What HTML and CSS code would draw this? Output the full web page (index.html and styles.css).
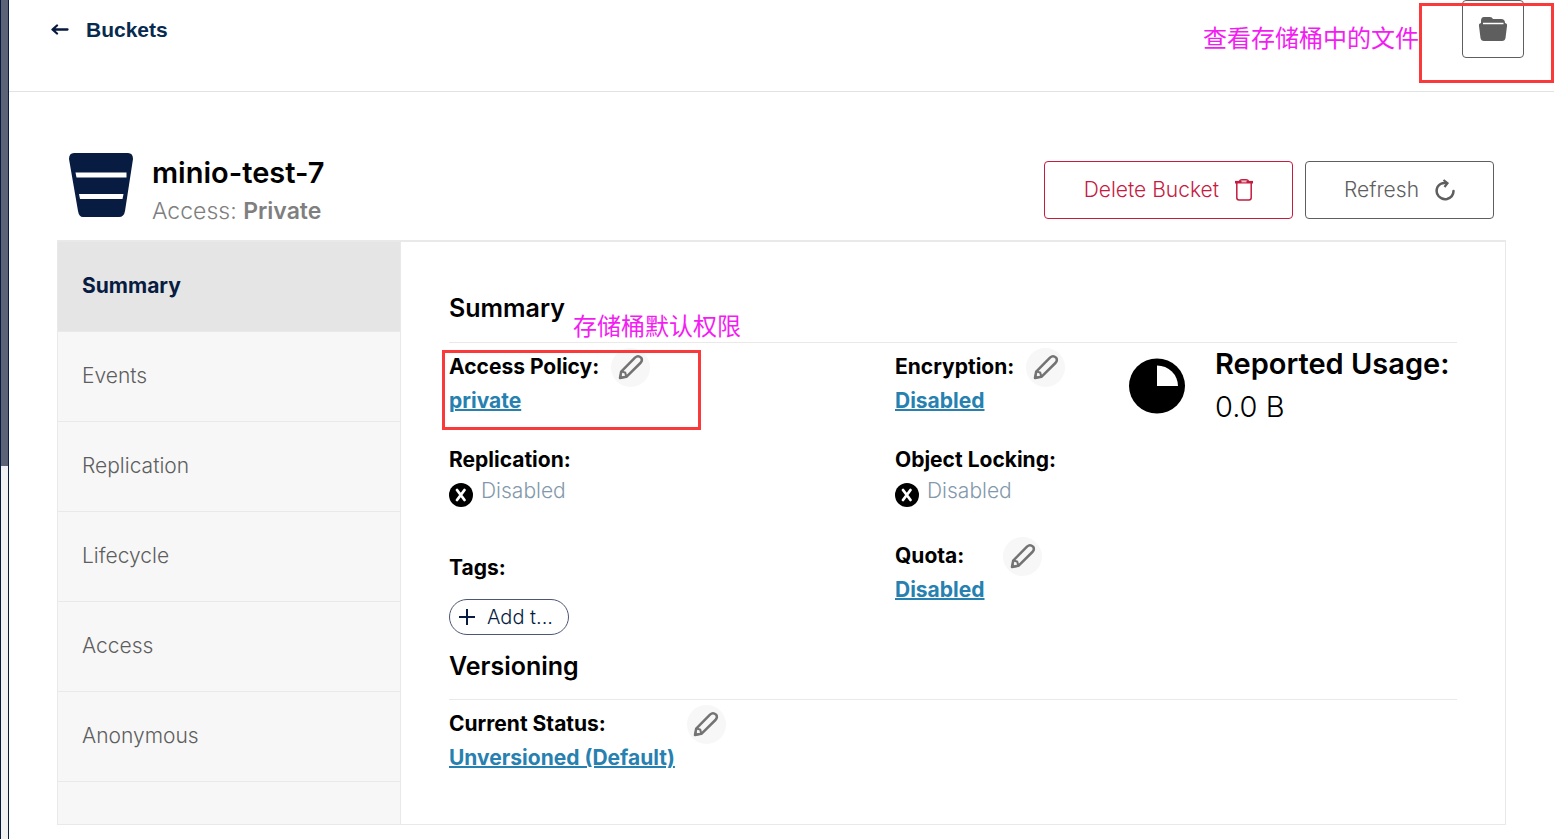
FILE: index.html
```html
<!DOCTYPE html>
<html lang="en">
<head>
<meta charset="utf-8">
<title>Buckets</title>
<link rel="stylesheet" href="styles.css">
</head>
<body>
<svg class="sprite" aria-hidden="true">
  <symbol id="pencil" viewBox="0 0 26 26">
    <path d="M2 24 3.2 17.6 17 3.6Q20 1 23 3.6 25 6.400 22.400 9L8.400 22.800Z" fill="none" stroke="currentColor" stroke-width="2.500" stroke-linejoin="round"/>
    <path d="M3.400 17.500 7.200 18.600 8.400 22.600" fill="none" stroke="currentColor" stroke-width="2"/>
    <path d="M1 25 2 20 6 24Z" fill="currentColor"/>
  </symbol>
  <symbol id="disabled" viewBox="0 0 24 24">
    <circle cx="12" cy="12" r="12"/>
    <path d="M8 7 15.500 17M15.500 7 8 17" stroke="#fff" stroke-width="2.800" stroke-linecap="round"/>
  </symbol>
</svg>
<div class="app">
  <div class="edge"><div class="edge-thumb"></div></div>
  <div class="page">
    <header class="topbar">
      <a class="back" href="#">
        <svg width="18" height="12" viewBox="0 0 18 12" fill="none" stroke="currentColor" stroke-width="2.300" stroke-linecap="round" stroke-linejoin="round"><path d="M16.500 5.500H2M6 1.500 1.500 5.500 6 9.500"/></svg>
        <span>Buckets</span>
      </a>
      <div class="browse">
        <button class="btn icon-btn" type="button" aria-label="Browse bucket">
          <svg width="30" height="26" viewBox="0 0 30 26"><path d="M3 7V5Q3 1 6 1H12Q14 1 15 3H23Q27 3 27 7Q29.500 7.500 29 10L27.500 22Q27 25 24 25H6Q3 25 2.500 22L1 10Q.5 7.500 3 7Z" fill="#5e5e5e"/><path d="M5 7.500H25.500" stroke="#fff" stroke-width="1.500"/></svg>
        </button>
        <div class="mark mark-files"></div>
        <span class="note note-files" lang="zh">查看存储桶中的文件</span>
      </div>
    </header>
    <main class="content">
      <div class="title-row">
        <svg class="bucket" width="64" height="64" viewBox="0 0 64 64"><path d="M5 0H59Q64 0 64 6L56 58Q55 64 50 64H14Q10 64 9 58L0 6Q0 0 5 0Z" fill="#081c42"/><path d="M6.500 19.500H57.500V24.500H7.500ZM10 41H54.500L53.500 46H11Z" fill="#fff"/></svg>
        <div class="title">
          <h1>minio-test-7</h1>
          <p>Access: <strong>Private</strong></p>
        </div>
        <div class="actions">
          <button class="btn danger" type="button">Delete Bucket
            <svg width="18" height="22" viewBox="0 0 18 22" fill="none" stroke="currentColor"><path d="M0 3.200H18" stroke-width="2.600"/><path d="M4.500 2Q5 .8 7 .8H11Q13 .8 13.500 2M1.800 4V18.500Q1.800 21 4 21H14Q16.200 21 16.200 18.500V4" stroke-width="1.500"/><path d="M6.500 2.800H11.500" stroke="#fff"/></svg>
          </button>
          <button class="btn" type="button">Refresh
            <svg width="20" height="22" viewBox="0 0 20 22" fill="none" stroke="currentColor" stroke-width="2.500"><path d="M11 4Q5 3.500 2.500 8 .3 13 3.500 17 7 21 12 20 18.500 18 18.500 12" stroke-linecap="round"/><path d="M8.500 1 12.500 4.200 9.500 8" stroke-width="2.200"/></svg>
          </button>
        </div>
      </div>
      <div class="card">
        <nav class="tabs">
          <a class="active" href="#">Summary</a>
          <a href="#">Events</a>
          <a href="#">Replication</a>
          <a href="#">Lifecycle</a>
          <a href="#">Access</a>
          <a href="#">Anonymous</a>
        </nav>
        <div class="panel">
          <section>
            <h2>Summary<span class="note note-policy" lang="zh">存储桶默认权限</span></h2>
            <div class="columns">
              <div class="col">
                <div class="field policy">
                  <div class="mark mark-policy"></div>
                  <div class="head"><h3>Access Policy:</h3><button class="edit" type="button" aria-label="Edit access policy"><svg><use href="#pencil"/></svg></button></div>
                  <a href="#">private</a>
                </div>
                <div class="field">
                  <h3>Replication:</h3>
                  <p class="off"><svg><use href="#disabled"/></svg>Disabled</p>
                </div>
                <div class="field tags">
                  <h3>Tags:</h3>
                  <button class="chip" type="button"><svg width="16" height="16" viewBox="0 0 16 16" stroke="currentColor" stroke-width="2"><path d="M8 0V16M0 8H16"/></svg><span>Add t...</span></button>
                </div>
              </div>
              <div class="col">
                <div class="field">
                  <div class="head"><h3>Encryption:</h3><button class="edit" type="button" aria-label="Edit encryption"><svg><use href="#pencil"/></svg></button></div>
                  <a href="#">Disabled</a>
                </div>
                <div class="field">
                  <h3>Object Locking:</h3>
                  <p class="off"><svg><use href="#disabled"/></svg>Disabled</p>
                </div>
                <div class="field">
                  <div class="head quota"><h3>Quota:</h3><button class="edit" type="button" aria-label="Edit quota"><svg><use href="#pencil"/></svg></button></div>
                  <a href="#">Disabled</a>
                </div>
              </div>
              <div class="usage">
                <svg width="56" height="56" viewBox="0 0 56 56"><ellipse cx="28" cy="28" rx="28" ry="27.500"/><path d="M28 7.500V28H49A21 20.500 0 0 0 28 7.500Z" fill="#fff"/></svg>
                <div><h3>Reported Usage:</h3><p>0.0 B</p></div>
              </div>
            </div>
          </section>
          <section>
            <h2 class="versioning">Versioning</h2>
            <div class="col">
              <div class="field status">
                <div class="head"><h3>Current Status:</h3><button class="edit" type="button" aria-label="Edit versioning"><svg><use href="#pencil"/></svg></button></div>
                <a href="#">Unversioned (Default)</a>
              </div>
            </div>
          </section>
        </div>
      </div>
    </main>
  </div>
</div>
</body>
</html>
```
FILE: styles.css
```css
* { box-sizing: border-box; }
body { margin: 0; background: #fff; color: #000; font: 300 21px/28px Inter, "Noto Sans CJK SC", sans-serif; }
h1, h2, h3, p { margin: 0; }
button { font: inherit; cursor: pointer; }
svg { display: block; flex: none; }
.sprite { position: absolute; width: 0; height: 0; }

.app { display: flex; min-height: 100vh; }
.edge { flex: none; width: 9px; border: solid #081c42; border-width: 0 1px; background: #f1f1f1; }
.edge-thumb { height: 466px; background: #5d6376; }
.page { flex: 1; min-width: 0; }

.topbar { display: flex; justify-content: space-between; align-items: flex-start; height: 92px; padding: 0 30px 0 42px; border-bottom: 1px solid #e2e2e2; }
.back { display: flex; align-items: center; gap: 17px; padding-top: 16px; color: #072a4e; font: bold 21px/28px "Liberation Sans", Arial, sans-serif; text-decoration: none; }
.back svg { color: #07193e; }
.browse { position: relative; }
.btn { display: flex; align-items: center; gap: 16px; height: 58px; padding: 0 38px; border: 1px solid #5e5e5e; border-radius: 4px; background: #fff; color: #5e5e5e; }
.icon-btn { padding: 0 15px; }
.danger { padding: 0 39px; border-color: #c51b3f; color: #c51b3f; }

.mark { position: absolute; border: 3px solid #fa3a3a; pointer-events: none; }
.mark-files { top: 3px; left: -43px; width: 135px; height: 80px; }
.mark-policy { top: 3px; left: -7px; width: 259px; height: 80px; }
.note { position: absolute; color: #f31cf3; font: 400 24px/32px "Noto Sans CJK SC", sans-serif; white-space: nowrap; }
.note-files { top: 21px; right: 105px; }
.note-policy { left: 124px; top: 19px; }

.content { padding: 60px 48px 14px; }
.title-row { display: flex; align-items: center; height: 88px; padding: 0 12px; }
.bucket { margin-bottom: 22px; }
.title { margin: 0 auto 10px 19px; }
h1 { font-size: 29px; line-height: 40px; font-weight: 600; }
.title p { color: #7f7f7f; font-size: 23px; line-height: 36px; }
.title strong { font-weight: 600; }
.actions { display: flex; gap: 12px; margin-bottom: 12px; }

.card { display: flex; border: 1px solid #e9e9e9; border-top-width: 2px; }
.tabs { flex: none; width: 343px; border-right: 1px solid #e9e9e9; background: #f7f7f7; }
.tabs a { display: flex; align-items: center; height: 90px; padding: 0 24px 2px; border-bottom: 1px solid #e9e9e9; color: #5e5e5e; text-decoration: none; }
.tabs .active { background: #e5e5e5; color: #081c42; font-weight: 700; }
.panel { flex: 1; min-width: 0; padding: 48px 48px 52px; }

h2 { position: relative; height: 53px; border-bottom: 1px solid #e9e9e9; font-size: 25px; line-height: 36px; font-weight: 600; }
.versioning { height: 52px; }
h3 { font-size: 21px; line-height: 28px; font-weight: 700; }
.columns { display: grid; grid-template-columns: 446fr 234fr 328fr; min-height: 305px; }
.col { display: flex; flex-direction: column; gap: 31px; padding-top: 4px; }
.field { position: relative; }
.field > a { color: #2781b0; font-weight: 700; text-decoration-thickness: 2px; }
.head { display: flex; align-items: center; gap: 12px; height: 40px; }
.quota { gap: 39px; }
.status .head { gap: 81px; }
.edit { display: flex; align-items: center; justify-content: center; width: 39px; height: 39px; padding: 0; border: 0; border-radius: 50%; background: #f7f7f7; color: #737373; }
.edit svg { width: 26px; height: 26px; }
.off { display: flex; gap: 8px; height: 28px; margin-top: 3px; color: #8399ab; }
.off svg { width: 24px; height: 24px; margin-top: 6px; color: #000; }
.tags { padding-top: 18px; }
.chip { display: flex; align-items: center; gap: 12px; height: 36px; margin-top: 17px; padding: 0 15px 1px 9px; border: 1px solid #4c5776; border-radius: 18px; background: #fff; color: #081c42; font-size: 20px; white-space: nowrap; }
.usage { display: flex; gap: 30px; padding-top: 15px; }
.usage > div { margin-top: -15px; white-space: nowrap; }
.usage h3 { font-size: 29px; line-height: 42px; font-weight: 600; }
.usage p { font-size: 29px; line-height: 43px; }
```
